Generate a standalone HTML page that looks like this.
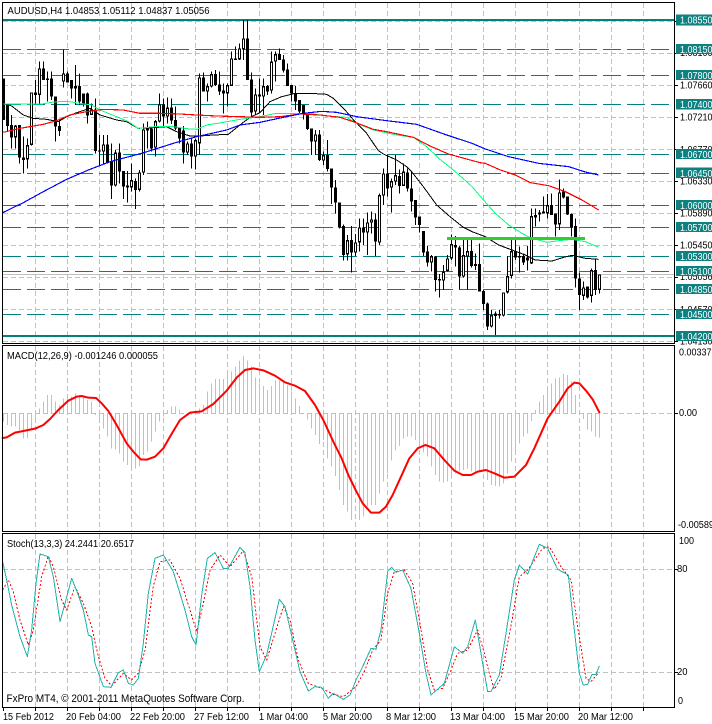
<!DOCTYPE html>
<html><head><meta charset="utf-8"><title>AUDUSD,H4</title>
<style>html,body{margin:0;padding:0;background:#fff;width:712px;height:724px;overflow:hidden}svg{display:block}
text{font-family:"Liberation Sans",sans-serif;font-size:10px;fill:#000}
.w text{fill:#fff}</style></head><body>
<svg width="712" height="724" viewBox="0 0 712 724" xmlns="http://www.w3.org/2000/svg">
<rect width="712" height="724" fill="#fff"/>
<!-- grid -->
<g fill="none" stroke="#c0c0c0" stroke-width="1" stroke-dasharray="5 3" shape-rendering="crispEdges">
<path d="M35.5 3V343M67.5 3V343M99.5 3V343M131.5 3V343M163.5 3V343M195.5 3V343M227.5 3V343M259.5 3V343M291.5 3V343M323.5 3V343M355.5 3V343M387.5 3V343M419.5 3V343M451.5 3V343M483.5 3V343M515.5 3V343M547.5 3V343M579.5 3V343M611.5 3V343M643.5 3V343"/>
<path d="M35.5 346V531M67.5 346V531M99.5 346V531M131.5 346V531M163.5 346V531M195.5 346V531M227.5 346V531M259.5 346V531M291.5 346V531M323.5 346V531M355.5 346V531M387.5 346V531M419.5 346V531M451.5 346V531M483.5 346V531M515.5 346V531M547.5 346V531M579.5 346V531M611.5 346V531M643.5 346V531"/>
<path d="M35.5 534V707M67.5 534V707M99.5 534V707M131.5 534V707M163.5 534V707M195.5 534V707M227.5 534V707M259.5 534V707M291.5 534V707M323.5 534V707M355.5 534V707M387.5 534V707M419.5 534V707M451.5 534V707M483.5 534V707M515.5 534V707M547.5 534V707M579.5 534V707M611.5 534V707M643.5 534V707"/>
<path d="M3 21.5H674M3 53.5H674M3 85.5H674M3 117.5H674M3 149.5H674M3 181.5H674M3 213.5H674M3 245.5H674M3 277.5H674M3 309.5H674M3 341.5H674M3 413.5H674M3 569.5H674M3 672.5H674"/>
</g>
<!-- histogram -->
<g transform="translate(0 340) scale(.33333)" fill="none" stroke="#c0c0c0" stroke-width="3" shape-rendering="crispEdges">
<path d="M10.5 219V245M22.5 219V255M34.5 219V260M46.5 219V260M58.5 219V270M70.5 219V295M82.5 219V295M94.5 219V270M106.5 219V240M118.5 219V205M130.5 219V185M142.5 219V165M154.5 219V165M166.5 219V185M178.5 219V195M190.5 219V175M202.5 219V165M214.5 219V170M226.5 219V160M238.5 219V165M250.5 219V170M262.5 219V180M274.5 219V185M286.5 219V225M298.5 219V235M310.5 219V265M322.5 219V290M334.5 219V325M346.5 219V328M358.5 219V340M370.5 219V365M382.5 219V375M394.5 219V380M406.5 219V385M418.5 219V380M430.5 219V345M442.5 219V335M454.5 219V305M466.5 219V275M478.5 219V245M490.5 219V230M502.5 219V210M514.5 219V200M526.5 219V200M538.5 219V208M550.5 219V222M562.5 219V225M574.5 219V225M586.5 219V215M598.5 219V205M610.5 219V195M622.5 219V155M634.5 219V130M646.5 219V117M658.5 219V117M670.5 219V117M682.5 219V100M694.5 219V95M706.5 219V80M718.5 219V62M730.5 219V48M742.5 219V62M754.5 219V80M766.5 219V112M778.5 219V130M790.5 219V138M802.5 219V150M814.5 219V138M826.5 219V122M838.5 219V122M850.5 219V125M862.5 219V135M874.5 219V155M886.5 219V175M898.5 219V198M910.5 219V220M922.5 219V238M934.5 219V265M946.5 219V285M958.5 219V312M970.5 219V300M982.5 219V355M994.5 219V380M1006.5 219V408M1018.5 219V450M1030.5 219V495M1042.5 219V515M1054.5 219V540"/>
<g transform="translate(1068 0)"><path d="M10.5 219V540M22.5 219V530M34.5 219V500M46.5 219V495M58.5 219V495M70.5 219V460M82.5 219V425M94.5 219V400M106.5 219V362M118.5 219V332M130.5 219V318M142.5 219V295M154.5 219V290M166.5 219V290M178.5 219V300M190.5 219V325M202.5 219V338M214.5 219V350M226.5 219V380M238.5 219V405M250.5 219V425M262.5 219V428M274.5 219V425M286.5 219V405M298.5 219V400M310.5 219V395M322.5 219V390M334.5 219V385M346.5 219V395M358.5 219V400M370.5 219V395M382.5 219V395M394.5 219V420M406.5 219V435M418.5 219V438M430.5 219V440M442.5 219V430M454.5 219V400M466.5 219V365M478.5 219V340M490.5 219V310M502.5 219V290M514.5 219V280M526.5 219V243M538.5 219V210M550.5 219V185M562.5 219V165M574.5 219V138M586.5 219V130M598.5 219V115M610.5 219V112M622.5 219V102M634.5 219V105M646.5 219V125M658.5 219V165M670.5 219V219M682.5 219V237M694.5 219V268M706.5 219V275M718.5 219V290M730.5 219V293"/></g>
</g>
<!-- levels -->
<g fill="none" stroke="#008080" shape-rendering="crispEdges">
<path stroke-width="2" d="M3 20H674M3 336H674"/>
<path stroke-width="1" stroke-dasharray="18 6" d="M3 49.5H674M3 75.5H674M3 104.5H674M3 154.5H674M3 173.5H674M3 205.5H674M3 227.5H674M3 256.5H674M3 271.5H674M3 289.5H674M3 314.5H674"/>
</g>
<path d="M3 274.5H674" stroke="#c0c0c0" stroke-width="1" shape-rendering="crispEdges"/>
<!-- candles -->
<g transform="scale(.33333)" fill="none" stroke="#000" shape-rendering="crispEdges">
<path stroke-width="3" d="M10.5 235V360M22.5 310V395M34.5 345V445M46.5 375V445M58.5 375V490M70.5 410V520M82.5 415V505M94.5 277V437M106.5 240V310M118.5 185V310M130.5 185V240M142.5 215V305M154.5 215V300M166.5 290V425M178.5 360V408M190.5 148V262M202.5 215V247M214.5 240V295M226.5 195V315M238.5 220V315M250.5 280V320M262.5 278V370M274.5 310V345M286.5 295V460M298.5 405V495M310.5 405V490M322.5 405V490M334.5 430V597M346.5 450V560M358.5 430V550M370.5 513V597M382.5 513V608M394.5 490V575M406.5 535V627M418.5 510V575M430.5 370V525M442.5 365V445M454.5 380V455M466.5 360V470M478.5 280V368M490.5 295V380M502.5 293V370M514.5 295V372M526.5 320V390M538.5 382V430M550.5 378V490M562.5 425V465M574.5 415V505M586.5 415V508M598.5 220V465M610.5 218V275M622.5 250V305M634.5 215V262M646.5 210V258M658.5 215V285M670.5 250V340M682.5 250V320M694.5 155V258M706.5 140V180M718.5 130V180M730.5 60V180M742.5 60V240M754.5 218V350M766.5 265V345M778.5 235V340M790.5 235V345M802.5 255V285M814.5 155V280M826.5 155V245M838.5 145V180M850.5 165V218M862.5 190V258M874.5 255V305M886.5 258V330M898.5 300V340M910.5 315V358M922.5 337V390M934.5 385V465M946.5 390V465M958.5 390V483M970.5 455V495M982.5 420V515M994.5 505V612M1006.5 540V640M1018.5 607V685M1030.5 673V782M1042.5 705V782M1054.5 678V818M1066.5 702V768M1078.5 655V755M1090.5 655V735M1102.5 638V765M1114.5 635V700M1126.5 640V768M1138.5 580V735M1150.5 505V615M1162.5 465V590M1174.5 535V638M1186.5 465V555M1198.5 508V580M1210.5 490V558M1222.5 505V575M1234.5 515V635M1246.5 600V675M1258.5 650V698M1270.5 693V768M1282.5 738V800M1294.5 765V815M1306.5 768V875M1318.5 822V893M1330.5 795V870M1342.5 765V815M1354.5 703V780M1366.5 708V800M1378.5 738V868M1390.5 715V832M1402.5 715V868M1414.5 715V802M1426.5 760V810M1438.5 730V875M1450.5 870V930M1462.5 908V990M1474.5 930V982M1486.5 935V1005M1498.5 930V955M1510.5 877V950M1522.5 768V880M1534.5 717V835M1546.5 720V780M1558.5 740V818M1570.5 760V795M1582.5 738V812M1594.5 625V792M1606.5 625V680M1618.5 630V665M1630.5 590V640M1642.5 582V655M1654.5 580V645M1666.5 640V710M1678.5 538V690M1690.5 565V595M1702.5 590V645M1714.5 640V710M1726.5 655V863M1738.5 818V930M1750.5 845V900M1762.5 860V895M1774.5 805V908M1786.5 778V885M1798.5 823V880"/>
<path stroke-width="9" d="M10.5 235V360M22.5 310V378M34.5 375V412M46.5 377V412M58.5 375V473M70.5 472V480M82.5 435V478M94.5 277V435M106.5 277V285M118.5 205V285M130.5 205V240M142.5 235V240M154.5 235V290M166.5 290V380M178.5 378V393M190.5 220V245M202.5 220V247M214.5 240V265M226.5 258V266M238.5 258V305M250.5 280V310M262.5 280V347M274.5 328V345M286.5 328V453M298.5 452V455M310.5 433V455M322.5 433V487M334.5 485V557M346.5 458V557M358.5 458V515M370.5 513V560M382.5 557V562M394.5 540V562M406.5 543V570M418.5 517V570M430.5 388V518M442.5 385V392M454.5 385V445M466.5 363V443M478.5 313V365M490.5 313V350M502.5 323V350M514.5 323V362M526.5 360V385M538.5 382V415M550.5 392V458M562.5 430V458M574.5 430V470M586.5 420V470M598.5 232V430M610.5 232V275M622.5 258V275M634.5 222V260M646.5 222V255M658.5 253V275M670.5 272V280M682.5 255V280M694.5 175V258M706.5 175V180M718.5 145V178M730.5 115V148M742.5 115V240M754.5 238V338M766.5 283V335M778.5 283V290M790.5 258V290M802.5 258V275M814.5 185V272M826.5 162V185M838.5 162V180M850.5 178V212M862.5 208V258M874.5 255V280M886.5 280V305M898.5 300V335M910.5 315V340M922.5 337V387M934.5 385V425M946.5 403V425M958.5 403V480M970.5 465V482M982.5 465V507M994.5 505V562M1006.5 562V608M1018.5 607V682M1030.5 678V765M1042.5 720V763M1054.5 720V758M1066.5 727V758M1078.5 682V727M1090.5 682V698M1102.5 667V698M1114.5 658V668M1126.5 658V725M1138.5 585V728M1150.5 520V587M1162.5 520V565M1174.5 543V563M1186.5 525V545M1198.5 528V558M1210.5 515V558M1222.5 518V565M1234.5 565V605M1246.5 600V653M1258.5 650V675M1270.5 693V758M1282.5 755V788M1294.5 768V788M1306.5 770V840M1318.5 837V842M1330.5 815V842M1342.5 775V813M1354.5 732V775M1366.5 735V743M1378.5 742V830M1390.5 765V830M1402.5 753V770M1414.5 753V798M1426.5 792V798M1438.5 792V875M1450.5 873V912M1462.5 910V980M1474.5 945V980M1486.5 940V948M1498.5 942V947M1510.5 877V947M1522.5 828V877M1534.5 753V828M1546.5 753V772M1558.5 768V772M1570.5 768V788M1582.5 772V782M1594.5 648V790M1606.5 645V653M1618.5 638V643M1630.5 635V640M1642.5 615V640M1654.5 615V645M1666.5 640V673M1678.5 577V673M1690.5 575V592M1702.5 590V643M1714.5 642V682M1726.5 678V835M1738.5 835V885M1750.5 862V888M1762.5 860V892M1774.5 810V888M1786.5 810V870M1798.5 823V870"/>
<path stroke="#fff" stroke-width="3" d="M46.5 381V408M82.5 439V474M94.5 281V431M118.5 209V281M190.5 224V241M274.5 332V341M310.5 437V451M346.5 462V553M394.5 544V558M418.5 521V566M430.5 392V514M466.5 367V439M478.5 317V361M502.5 327V346M562.5 434V454M586.5 424V466M598.5 236V426M622.5 262V271M634.5 226V256M682.5 259V276M694.5 179V254M718.5 149V174M730.5 119V144M766.5 287V331M790.5 262V286M814.5 189V268M826.5 166V181M946.5 407V421M970.5 469V478M1042.5 724V759M1066.5 731V754M1078.5 686V723M1102.5 671V694M1114.5 662V664M1138.5 589V724M1150.5 524V583M1174.5 547V559M1186.5 529V541M1210.5 519V554M1294.5 772V784M1330.5 819V838M1342.5 779V809M1354.5 736V771M1390.5 769V826M1402.5 757V766M1474.5 949V976M1510.5 881V943M1522.5 832V873M1534.5 757V824M1594.5 652V786M1642.5 619V636M1678.5 581V669M1750.5 866V884M1774.5 814V884M1798.5 827V866"/>
</g>
<!-- moving averages -->
<g transform="scale(.33333)" fill="none" stroke-linejoin="round" shape-rendering="crispEdges">
<path stroke="#000" stroke-width="3" d="M10 310L35 318L70 345L100 355L140 358L175 365L200 350L230 338L270 325L300 345L350 360L380 365L415 385L460 383L500 380L530 395L570 408L600 408L640 405L685 403L720 375L750 352L780 338L810 305L845 290L885 280L930 280L980 283L1000 295L1035 330L1065 365L1100 400L1135 452L1150 462L1190 480L1220 500L1235 515L1270 560L1310 615L1350 650L1390 682L1416 695L1456 710L1496 735L1536 750L1576 765L1606 780L1656 783L1691 772L1716 766L1756 775L1796 778"/>
<path stroke="#00ff7f" stroke-width="3" d="M10 312L60 312L125 312L160 306L200 304L240 310L275 315L300 330L350 350L385 365L415 385L465 380L520 380L560 386L590 388L620 375L665 368L720 358L780 350L830 340L885 340L930 340L980 348L1040 352L1070 370L1120 390L1190 405L1240 412L1280 440L1320 478L1360 510L1400 545L1416 560L1446 595L1486 640L1526 675L1566 700L1591 713L1641 727L1676 722L1716 718L1756 725L1796 742"/>
<path stroke="#f00" stroke-width="3.5" d="M10 397L60 385L130 373L170 362L210 345L260 335L310 328L370 330L420 340L480 340L540 342L590 345L650 348L720 350L780 352L840 350L900 342L960 345L1020 352L1060 365L1120 388L1160 395L1240 412L1290 438L1345 462L1440 488L1456 490L1501 510L1546 525L1591 548L1646 557L1696 575L1746 600L1796 630"/>
<path stroke="#00f" stroke-width="3.5" d="M8 638L70 608L130 575L200 538L265 510L330 485L425 460L520 430L590 410L680 390L720 375L780 367L850 352L910 340L965 334L1010 337L1070 350L1160 362L1250 373L1340 405L1416 430L1456 447L1526 470L1616 490L1706 500L1756 516L1796 525"/>
</g>
<path d="M447 238.5H585" stroke="#32cd32" stroke-width="3" fill="none"/>
<!-- MACD line -->
<g transform="translate(0 340) scale(.33333)" fill="none" stroke="#f00" stroke-width="6" stroke-linejoin="round" stroke-linecap="round">
<path d="M8 294L20 292L45 278L70 273L105 266L130 255L150 237L175 210L205 182L230 170L245 168L265 173L288 174L305 190L325 213L350 255L380 310L400 335L422 358L440 359L465 350L490 325L510 290L540 240L570 218L605 214L640 192L680 152L710 113L735 90L760 85L790 91L825 107L855 127L885 137L915 153L945 195L970 240L1000 305L1025 355L1045 405L1068 452L1088 490L1113 518L1138 518L1158 500L1178 465L1203 410L1228 355L1253 325L1276 315L1303 325L1333 360L1363 392L1388 405L1413 405L1433 395L1458 390L1483 400L1513 413L1543 410L1578 375L1603 325L1643 235L1678 185L1703 145L1723 128L1738 130L1758 152L1778 178L1798 217"/>
</g>
<!-- stochastic -->
<g transform="translate(0 530) scale(.33333)" fill="none" stroke-linejoin="round" shape-rendering="crispEdges">
<path stroke="#f00" stroke-width="3" stroke-dasharray="6 6" d="M8 180L25 150L40 185L60 270L85 345L100 300L125 140L145 78L160 110L185 210L200 240L225 170L250 220L275 290L295 380L315 445L335 468L370 430L395 450L415 430L435 360L460 170L480 95L510 90L540 145L570 240L590 305L610 220L630 120L660 75L690 110L730 62L755 140L780 350L800 390L825 310L850 230L870 270L895 390L925 460L965 475L1000 493L1030 500L1068 470L1093 425L1118 360L1143 330L1163 190L1183 125L1213 120L1238 160L1258 270L1283 420L1303 480L1328 475L1353 420L1373 370L1403 360L1433 300L1453 370L1468 430L1483 478L1503 445L1538 260L1558 140L1583 120L1628 55L1648 50L1683 110L1713 150L1733 290L1758 445L1773 455L1793 432"/>
<path stroke="#20b2aa" stroke-width="3" d="M8 95L20 150L35 225L60 320L82 380L95 300L108 160L120 72L145 80L160 140L180 275L195 220L215 145L235 195L250 240L265 315L275 320L285 400L310 470L333 472L355 428L370 420L385 460L400 465L415 445L430 340L445 190L465 85L490 75L520 125L555 240L575 320L588 345L605 195L622 85L645 68L670 115L685 115L720 52L735 68L750 170L765 330L778 425L800 375L838 208L855 230L885 360L900 425L925 483L945 470L965 472L985 505L1000 490L1030 508L1050 495L1068 450L1088 410L1113 355L1128 358L1143 300L1163 125L1175 112L1188 127L1208 120L1233 175L1258 310L1278 430L1293 495L1333 460L1363 350L1388 370L1403 350L1426 270L1448 400L1463 485L1473 485L1498 435L1518 310L1543 150L1558 105L1583 132L1618 43L1643 55L1673 118L1705 135L1723 300L1738 430L1750 465L1763 463L1776 433L1788 433L1798 408"/>
</g>
<!-- frames -->
<g fill="none" stroke="#000" stroke-width="1" shape-rendering="crispEdges">
<rect x="2.5" y="2.5" width="672" height="341"/>
<rect x="2.5" y="345.5" width="672" height="186"/>
<rect x="2.5" y="533.5" width="672" height="174"/>
<path d="M675 21.5H678M675 53.5H678M675 85.5H678M675 117.5H678M675 149.5H678M675 181.5H678M675 213.5H678M675 245.5H678M675 277.5H678M675 309.5H678M675 341.5H678M675 413.5H678M675 569.5H678M675 672.5H678M3.5 708V711M35.5 708V711M67.5 708V711M99.5 708V711M131.5 708V711M163.5 708V711M195.5 708V711M227.5 708V711M259.5 708V711M291.5 708V711M323.5 708V711M355.5 708V711M387.5 708V711M419.5 708V711M451.5 708V711M483.5 708V711M515.5 708V711M547.5 708V711M579.5 708V711M611.5 708V711M643.5 708V711"/>
</g>
<!-- legends -->
<text x="7.5" y="14" textLength="202" lengthAdjust="spacingAndGlyphs" style="font-size:10.5px">AUDUSD,H4  1.04853 1.05112 1.04837 1.05056</text>
<text x="7" y="359" textLength="151" lengthAdjust="spacingAndGlyphs" style="font-size:10.5px">MACD(12,26,9) -0.001246 0.000055</text>
<text x="7" y="547" textLength="127" lengthAdjust="spacingAndGlyphs" style="font-size:10.5px">Stoch(13,3,3) 24.2441 20.6517</text>
<text x="6.5" y="702" textLength="238" lengthAdjust="spacingAndGlyphs" style="font-size:11px">FxPro MT4, © 2001-2011 MetaQuotes Software Corp.</text>
<!-- axis text -->
<g>
<text x="680" y="56" textLength="32.5" lengthAdjust="spacingAndGlyphs">1.08100</text>
<text x="680" y="88.5" textLength="32.5" lengthAdjust="spacingAndGlyphs">1.07660</text>
<text x="680" y="120.5" textLength="32.5" lengthAdjust="spacingAndGlyphs">1.07210</text>
<text x="680" y="153" textLength="32.5" lengthAdjust="spacingAndGlyphs">1.06770</text>
<text x="680" y="184.5" textLength="32.5" lengthAdjust="spacingAndGlyphs">1.06330</text>
<text x="680" y="216.5" textLength="32.5" lengthAdjust="spacingAndGlyphs">1.05890</text>
<text x="680" y="248.5" textLength="32.5" lengthAdjust="spacingAndGlyphs">1.05450</text>
<text x="680" y="280" textLength="32.5" lengthAdjust="spacingAndGlyphs">1.05056</text>
<text x="680" y="313" textLength="32.5" lengthAdjust="spacingAndGlyphs">1.04570</text>
<text x="680" y="344.5" textLength="32.5" lengthAdjust="spacingAndGlyphs">1.04130</text>
<text x="679" y="355.5" textLength="32.5" lengthAdjust="spacingAndGlyphs">0.00337</text>
<text x="679" y="416" textLength="18" lengthAdjust="spacingAndGlyphs">0.00</text>
<text x="678" y="528" textLength="36" lengthAdjust="spacingAndGlyphs">-0.00589</text>
<text x="679" y="544" textLength="15" lengthAdjust="spacingAndGlyphs">100</text>
<text x="677" y="572" textLength="10.5" lengthAdjust="spacingAndGlyphs">80</text>
<text x="677" y="675" textLength="10.5" lengthAdjust="spacingAndGlyphs">20</text>
<text x="678" y="704" textLength="5" lengthAdjust="spacingAndGlyphs">0</text>
</g>
<g fill="#0d8080">
<rect x="676" y="14.5" width="36" height="11"/><rect x="676" y="44" width="36" height="10"/><rect x="676" y="70" width="36" height="10"/><rect x="676" y="99" width="36" height="10.5"/><rect x="676" y="149" width="36" height="10"/><rect x="676" y="167.5" width="36" height="10.5"/><rect x="676" y="200" width="36" height="10"/><rect x="676" y="222" width="36" height="10"/><rect x="676" y="251" width="36" height="10"/><rect x="676" y="266" width="36" height="10"/><rect x="676" y="284" width="36" height="10"/><rect x="676" y="309" width="36" height="10"/><rect x="676" y="331" width="36" height="10"/>
</g>
<g class="w">
<text x="680" y="23.5" textLength="32.5" lengthAdjust="spacingAndGlyphs">1.08550</text>
<text x="680" y="53" textLength="32.5" lengthAdjust="spacingAndGlyphs">1.08150</text>
<text x="680" y="79" textLength="32.5" lengthAdjust="spacingAndGlyphs">1.07800</text>
<text x="680" y="108" textLength="32.5" lengthAdjust="spacingAndGlyphs">1.07400</text>
<text x="680" y="158" textLength="32.5" lengthAdjust="spacingAndGlyphs">1.06700</text>
<text x="680" y="177" textLength="32.5" lengthAdjust="spacingAndGlyphs">1.06450</text>
<text x="680" y="209" textLength="32.5" lengthAdjust="spacingAndGlyphs">1.06000</text>
<text x="680" y="231" textLength="32.5" lengthAdjust="spacingAndGlyphs">1.05700</text>
<text x="680" y="260" textLength="32.5" lengthAdjust="spacingAndGlyphs">1.05300</text>
<text x="680" y="275" textLength="32.5" lengthAdjust="spacingAndGlyphs">1.05100</text>
<text x="680" y="293" textLength="32.5" lengthAdjust="spacingAndGlyphs">1.04850</text>
<text x="680" y="318" textLength="32.5" lengthAdjust="spacingAndGlyphs">1.04500</text>
<text x="680" y="340" textLength="32.5" lengthAdjust="spacingAndGlyphs">1.04200</text>
</g>
<!-- time axis -->
<g>
<text x="3" y="720" textLength="51" lengthAdjust="spacingAndGlyphs">15 Feb 2012</text>
<text x="66" y="720" textLength="55" lengthAdjust="spacingAndGlyphs">20 Feb 04:00</text>
<text x="130" y="720" textLength="55" lengthAdjust="spacingAndGlyphs">22 Feb 20:00</text>
<text x="194" y="720" textLength="55" lengthAdjust="spacingAndGlyphs">27 Feb 12:00</text>
<text x="259" y="720" textLength="49" lengthAdjust="spacingAndGlyphs">1 Mar 04:00</text>
<text x="323" y="720" textLength="49" lengthAdjust="spacingAndGlyphs">5 Mar 20:00</text>
<text x="386" y="720" textLength="50" lengthAdjust="spacingAndGlyphs">8 Mar 12:00</text>
<text x="450" y="720" textLength="55" lengthAdjust="spacingAndGlyphs">13 Mar 04:00</text>
<text x="514" y="720" textLength="55" lengthAdjust="spacingAndGlyphs">15 Mar 20:00</text>
<text x="578" y="720" textLength="55" lengthAdjust="spacingAndGlyphs">20 Mar 12:00</text>
</g>
</svg>
</body></html>
